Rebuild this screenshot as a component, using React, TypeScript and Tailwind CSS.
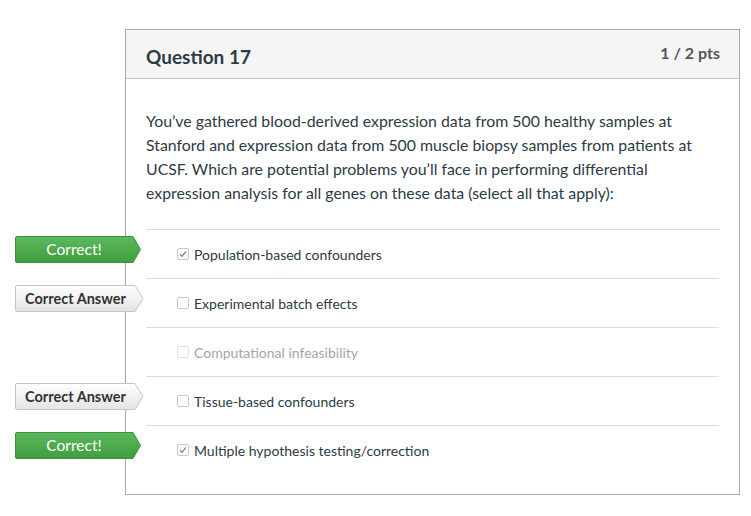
import React from "react";

type Answer = {
  text: string;
  checked: boolean;
  disabled?: boolean;
  label?: "correct" | "answer";
};

const answers: Answer[] = [
  { text: "Population-based confounders", checked: true, label: "correct" },
  { text: "Experimental batch effects", checked: false, label: "answer" },
  { text: "Computational infeasibility", checked: false, disabled: true },
  { text: "Tissue-based confounders", checked: false, label: "answer" },
  { text: "Multiple hypothesis testing/correction", checked: true, label: "correct" },
];

function Flag({ kind }: { kind: "correct" | "answer" }) {
  if (kind === "correct") {
    return (
      <div className="absolute left-[-131px] top-[6px] w-[126px] h-[27px] flex items-center">
        <svg className="absolute inset-0" width="126" height="27" viewBox="0 0 126 27">
          <defs>
            <linearGradient id="gr" x1="0" y1="0" x2="0" y2="1">
              <stop offset="0" stopColor="#5cb85c" />
              <stop offset="1" stopColor="#3f9e3f" />
            </linearGradient>
          </defs>
          <path d="M2 0.5 H118 L125.5 13.5 L118 26.5 H2 Q0.5 26.5 0.5 25 V2 Q0.5 0.5 2 0.5 Z" fill="url(#gr)" stroke="#3a923a" strokeWidth="1" />
        </svg>
        <span className="relative w-[118px] text-center text-[15.5px] leading-[20px] pb-[2px] text-white">Correct!</span>
      </div>
    );
  }
  return (
    <div className="absolute left-[-131px] top-[6px] w-[129px] h-[27px] flex items-center">
      <svg className="absolute inset-0" width="129" height="27" viewBox="0 0 129 27">
        <defs>
          <linearGradient id="gg" x1="0" y1="0" x2="0" y2="1">
            <stop offset="0" stopColor="#ffffff" />
            <stop offset="1" stopColor="#e4e4e4" />
          </linearGradient>
        </defs>
        <path d="M2 0.5 H120 L128 13.5 L120 26.5 H2 Q0.5 26.5 0.5 25 V2 Q0.5 0.5 2 0.5 Z" fill="url(#gg)" stroke="#c4c4c4" strokeWidth="1" />
      </svg>
      <span className="relative w-[121px] text-center text-[14.5px] leading-[20px] font-bold text-[#333]">Correct Answer</span>
    </div>
  );
}

function Box({ checked, disabled }: { checked: boolean; disabled?: boolean }) {
  return (
    <span
      className={`w-[12px] h-[12px] rounded-[2px] border flex items-center justify-center bg-white ${
        disabled ? "border-[#e2e2e2]" : "border-[#c8c8c8]"
      }`}
    >
      {checked && (
        <svg width="8" height="8" viewBox="0 0 8 8">
          <path d="M1 4.2 L3 6.2 L7 1.5" fill="none" stroke="#8a8a8a" strokeWidth="1.3" />
        </svg>
      )}
    </span>
  );
}

export default function App() {
  return (
    <div className="min-h-[516px] bg-white pt-[29px] pl-[125px] font-['Lato','Liberation_Sans',sans-serif] text-[#2d3b45]">
      <div className="w-[615px] h-[466px] border border-[#a9a9a9]">
        {/* Header */}
        <div className="h-[49px] bg-[#f5f5f5] border-b border-[#c7c7c7] flex justify-between pl-[20px] pr-[19px]">
          <h2 className="pt-[14px] text-[19px] font-bold leading-[26px]">Question 17</h2>
          <span className="pt-[12px] text-[16px] font-bold leading-[22px] text-[#555]">1 / 2 pts</span>
        </div>

        {/* Body */}
        <div className="px-[20px] pt-[30px]">
          <p className="text-[15.85px] leading-[24px] pr-[20px]">
            You’ve gathered blood-derived expression data from 500 healthy samples at Stanford and expression data
            from 500 muscle biopsy samples from patients at UCSF. Which are potential problems you’ll face in
            performing differential expression analysis for all genes on these data (select all that apply):
          </p>

          <div className="mt-[24px]">
            {answers.map((a) => (
              <div key={a.text} className="relative h-[49px] border-t border-[#dcdcdc] flex items-center pl-[31px] gap-[5px]">
                {a.label && <Flag kind={a.label} />}
                <Box checked={a.checked} disabled={a.disabled} />
                <span className={`text-[14px] ${a.disabled ? "text-[#a5a5a5]" : "text-[#2d3b45]"}`}>{a.text}</span>
              </div>
            ))}
          </div>
        </div>
      </div>
    </div>
  );
}
